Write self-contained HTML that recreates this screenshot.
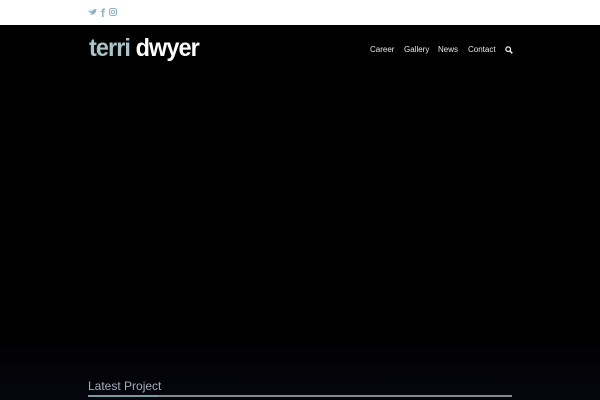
<!DOCTYPE html>
<html><head><meta charset="utf-8"><style>
body{margin:0;width:600px;height:400px;overflow:hidden;font-family:"Liberation Sans",sans-serif;background:#000;position:relative}
.top{position:absolute;left:0;top:0;width:600px;height:25px;background:#fff}
.hero{position:absolute;left:0;top:25px;width:600px;height:375px;background:linear-gradient(#000 0,#000 310px,#06060f 375px)}
.logo{position:absolute;left:89px;top:34px;font-size:25px;font-weight:bold;letter-spacing:-1px;color:#fff;transform:scaleX(0.94);transform-origin:left}
.logo span{color:#a8c4c8}
.nav{position:absolute;top:45px;font-size:8px;color:#e8e8e8}
.lp{position:absolute;left:88px;top:379px;font-size:12px;color:#aab;}
.line{position:absolute;left:88px;top:395px;width:424px;height:2px;background:#888}
.line i{position:absolute;left:0;top:0;width:70px;height:2px;background:#7d9aa0}
</style></head><body>
<div class="top">
<svg style="position:absolute;left:88px;top:8px" width="30" height="9" viewBox="0 0 30 9">
<path d="M0 2 Q2 4 4 3 Q2 3 1.5 1.5 Q3 3 5 2.5 Q6 0 8 1.5 L9 1 L8.3 2 Q8 7 1 7 Q3 6.5 4 5.5 Q1.5 5.5 0 2Z" fill="#8ab0c8"/>
<path d="M14 9 V4 H13 V3 H14 V2 Q14 0.5 16 0.5 H17 V2 H16 Q15.5 2 15.5 2.5 V3 H17 L16.8 4 H15.5 V9Z" fill="#8ab0c8"/>
<rect x="21.5" y="0.5" width="7" height="7" rx="2" fill="none" stroke="#8ab0c8" stroke-width="1"/>
<circle cx="25" cy="4" r="1.6" fill="none" stroke="#8ab0c8" stroke-width="0.9"/>
</svg>
</div>
<div class="hero"></div>
<div class="logo"><span>terri</span> dwyer</div>
<div class="nav" style="left:370px">Career</div>
<div class="nav" style="left:404px">Gallery</div>
<div class="nav" style="left:438px">News</div>
<div class="nav" style="left:468px">Contact</div>
<svg style="position:absolute;left:505px;top:46px" width="8" height="8" viewBox="0 0 8 8"><circle cx="3.2" cy="3.2" r="2.3" fill="none" stroke="#eee" stroke-width="1.3"/><path d="M5 5 L7.3 7.3" stroke="#eee" stroke-width="1.5"/></svg>
<div class="lp">Latest Project</div>
<div class="line"><i></i></div>
</body></html>
